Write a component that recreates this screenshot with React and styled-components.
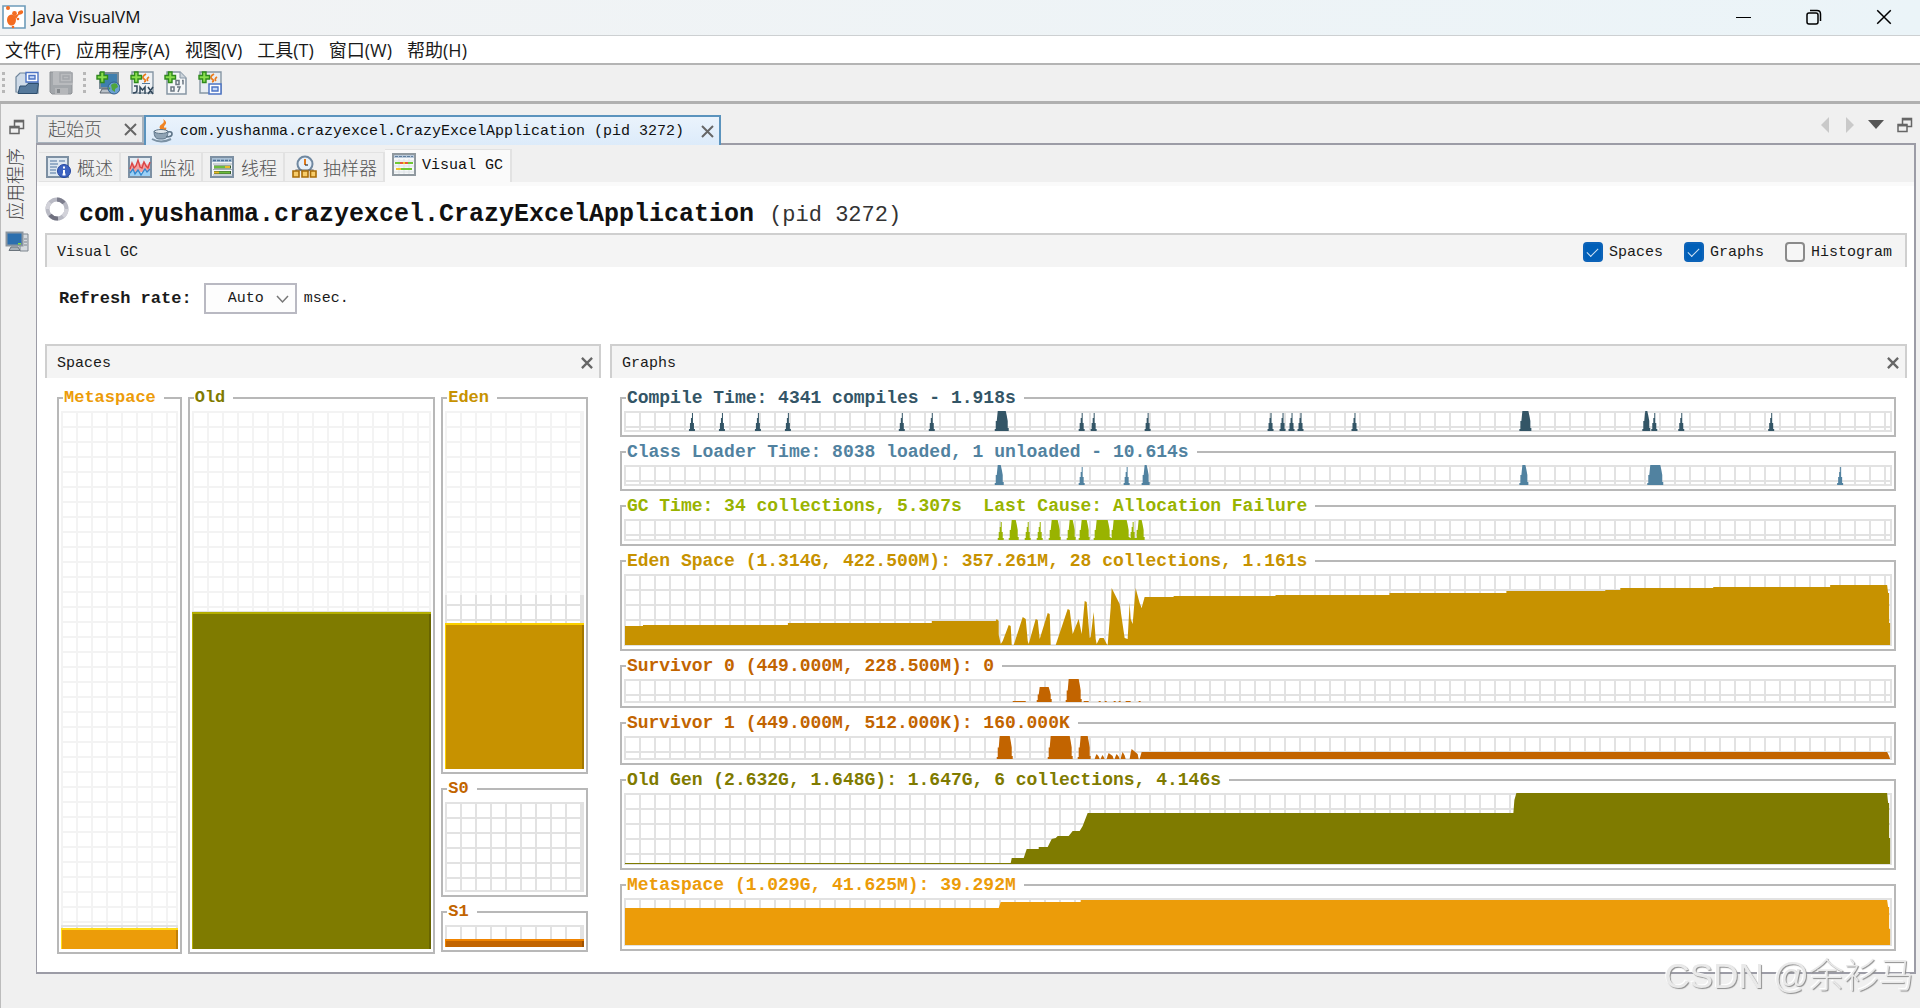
import React, { useState } from "react";
import styled, { createGlobalStyle, css } from "styled-components";

const GlobalStyle = createGlobalStyle`
  * {
    box-sizing: border-box;
  }
  body {
    margin: 0;
    background: #f0f0f0;
    color: #1a1a1a;
    font-family: "Liberation Mono", "Noto Sans CJK SC", monospace;
    font-size: 15px;
  }
  button, select, input {
    font: inherit;
    color: inherit;
    margin: 0;
  }
  button {
    border: 0;
    padding: 0;
    background: none;
  }
  svg {
    display: block;
    flex: none;
  }
`;

const sansFont = css`
  font-family: "Open Sans", "Noto Sans", "Noto Sans CJK SC", sans-serif;
`;

const Window = styled.div`
  min-height: 100vh;
  display: flex;
  flex-direction: column;
`;

const TitleBar = styled.header`
  ${sansFont}
  display: flex;
  align-items: center;
  height: 36px;
  padding: 0 28px 2px 2px;
  gap: 6px;
  background: linear-gradient(90deg, #f2f3f4, #ebf4f8);
  border-bottom: 1px solid #cdd0d2;
  font-size: 17px;
  color: #111;
`;

const WindowButtons = styled.div`
  display: flex;
  gap: 54px;
  margin-left: auto;
`;

const MenuBar = styled.nav`
  ${sansFont}
  display: flex;
  gap: 15px;
  height: 29px;
  padding: 0 5px;
  background: #fff;
  border-bottom: 2px solid #b4b4b4;
  font-size: 18px;
  line-height: 26px;
`;

const ToolBar = styled.div`
  display: flex;
  align-items: center;
  gap: 10px;
  height: 39px;
  padding: 0 2px 1px;
  border-bottom: 3px solid #b0b0b0;
`;

const Grip = styled.span`
  width: 3px;
  height: 22px;
  background: repeating-linear-gradient(#b8b8b8 0 3px, transparent 3px 6px);
`;

const Workspace = styled.div`
  flex: 1;
  display: flex;
  border-left: 1px solid #bcbcbc;
`;

const Rail = styled.aside`
  width: 35px;
  display: flex;
  flex-direction: column;
  align-items: center;
  padding: 15px 4px 0 0;
  gap: 11px;
`;

const RailLabel = styled.button`
  writing-mode: vertical-rl;
  text-orientation: sideways;
  transform: rotate(180deg);
  margin-top: 2px;
  font-size: 18px;
  line-height: 18px;
  font-weight: 300;
  color: #444;
`;

const Documents = styled.main`
  flex: 1;
  min-width: 0;
  display: flex;
  flex-direction: column;
  padding: 11px 4px 34px 0;
`;

const TabStrip = styled.div`
  display: flex;
  height: 30px;
  border-bottom: 2px solid #9c9ca6;
`;

const DocTab = styled.div`
  display: flex;
  align-items: center;
  gap: ${(p) => (p.$active ? "7px" : "22px")};
  padding: ${(p) => (p.$active ? "0 5px" : "0 5px 0 10px")};
  border: 2px solid #a9b3bd;
  border-bottom-width: ${(p) => (p.$active ? "0" : "1px")};
  background: #ececec;
  color: #555;
  ${(p) =>
    p.$active &&
    css`
      margin-bottom: -2px;
      border-color: #5b93bd;
      background: linear-gradient(#eaf3fc, #dcebfa);
      color: #111;
    `}
`;

const TabTitle = styled.button`
  font-size: ${(p) => (p.$cjk ? "18px" : "15px")};
  font-weight: ${(p) => (p.$cjk ? 300 : 400)};
  line-height: 24px;
  white-space: pre;
  padding-top: 2px;
  margin-right: ${(p) => (p.$cjk ? "0" : "10px")};
`;

const StripButtons = styled.div`
  display: flex;
  align-items: flex-start;
  gap: 13px;
  margin-left: auto;
  padding: 2px 3px 0 0;
`;

const DocBody = styled.section`
  flex: 1;
  display: flex;
  flex-direction: column;
  border: solid #9c9ca6;
  border-width: 0 2px 2px 1px;
  background: #fff;
`;

const ViewTabs = styled.div`
  display: flex;
  align-items: flex-end;
  height: 41px;
  padding: 0 2px 4px;
  background: linear-gradient(#f0f0f0 37px, #fafafa 37px);
`;

const ViewTab = styled.button`
  display: flex;
  align-items: center;
  gap: 6px;
  height: 30px;
  padding: 0 6px 0 7px;
  border: solid #e2e2e2;
  border-width: 1px 2px 1px 0;
  font-size: 18px;
  font-weight: 300;
  color: #555;
  white-space: pre;
  ${(p) =>
    p.$active &&
    css`
      height: 33px;
      gap: 5px;
      padding: 0 7px 2px;
      border-bottom: 0;
      background: #fafafa;
      font-size: 15px;
      font-weight: 400;
      color: #111;
    `}
`;

const Heading = styled.div`
  display: flex;
  align-items: flex-start;
  gap: 10px;
  height: 47px;
  padding: 11px 8px 0;
`;

const AppTitle = styled.h1`
  margin: 0;
  padding-top: 2px;
  font-size: 25px;
  line-height: 32px;
  color: #111;
  small {
    font-size: 22px;
    font-weight: 400;
    color: #333;
  }
`;

const Content = styled.div`
  padding: 0 7px 18px 8px;
`;

const PanelHeader = styled.div`
  display: flex;
  align-items: center;
  height: 34px;
  padding: 2px ${(p) => (p.$options ? "13px" : "6px")} 0 10px;
  border: 2px solid #cfcfcf;
  border-bottom: 0;
  background: #f4f4f4;
`;

const PanelTitle = styled.h2`
  margin: 0 auto 0 0;
  font-size: 15px;
  font-weight: 400;
`;

const Option = styled.label`
  display: flex;
  align-items: center;
  gap: 6px;
  margin-left: 21px;
`;

const CheckBox = styled.input`
  appearance: none;
  display: grid;
  place-items: center;
  width: 20px;
  height: 20px;
  border: 2px solid #8a8a8a;
  border-radius: 4px;
  background: #f6f6f6;
  &:checked {
    border-color: #0d63b8;
    background: #005fb8;
  }
  &:checked::after {
    content: "";
    width: 10px;
    height: 5px;
    margin-top: -3px;
    border: solid #cfe3f5;
    border-width: 0 0 1px 1px;
    transform: rotate(-45deg);
  }
`;

const RefreshRow = styled.div`
  display: flex;
  align-items: center;
  gap: 7px;
  height: 77px;
  padding: 0 14px 14px;
  label {
    font-size: 17px;
    font-weight: 700;
  }
`;

const SelectBox = styled.div`
  position: relative;
  margin-left: 5px;
  svg {
    position: absolute;
    right: 8px;
    top: 12px;
    pointer-events: none;
  }
`;

const Select = styled.select`
  appearance: none;
  width: 93px;
  height: 31px;
  padding: 0 22px;
  border: 2px solid #b9b9c2;
  border-radius: 0;
  background: #fdfdfd;
`;

const Panels = styled.div`
  display: grid;
  grid-template-columns: minmax(0, 3fr) minmax(0, 7fr);
  gap: 9px;
`;

const Panel = styled.section`
  display: flex;
  flex-direction: column;
`;

const SpacesGrid = styled.div`
  flex: 1;
  display: grid;
  grid-template-columns: 125fr 248fr 147fr;
  gap: 6px;
  padding: 10px 13px 0 12px;
`;

const SpaceColumn = styled.div`
  display: flex;
  flex-direction: column;
  gap: 5px;
  padding-bottom: 2px;
`;

const GraphList = styled.div`
  display: flex;
  flex-direction: column;
  gap: 5px;
  padding: 10px 11px 3px 10px;
`;

const Frame = styled.fieldset`
  display: flex;
  flex-direction: column;
  flex: ${(p) => (p.$grow ? 1 : "none")};
  min-width: 0;
  margin: 0;
  padding: 3px 2px;
  border: 2px solid #b8b8b8;
`;

const Legend = styled.legend`
  margin-left: 2px;
  padding: 0 8px 0 1px;
  font-size: ${(p) => (p.$small ? "17px" : "18px")};
  font-weight: 700;
  line-height: 20px;
  white-space: pre;
  color: ${(p) => p.$color};
`;

const gridLines = css`
  background-image: linear-gradient(90deg, ${(p) => p.$line || "#e2e2e2"} 2px, transparent 2px),
    linear-gradient(${(p) => p.$line || "#e2e2e2"} 2px, transparent 2px);
  background-size: 15px 15px;
  background-position: 0 ${(p) => p.$phase || 0}px;
`;

const SpacePlot = styled.div`
  flex: 1 0 ${(p) => p.$min}px;
  display: flex;
  flex-direction: column;
`;

const Cells = styled.div`
  ${gridLines}
  flex: ${(p) => p.$share} 1 0;
  border-right: 2px solid ${(p) => p.$line || "#e2e2e2"};
  border-bottom: ${(p) => (p.$closed ? "2px solid #e2e2e2" : "0")};
`;

const Used = styled.div`
  flex: ${(p) => p.$share} 1 0;
  background: ${(p) => p.$color};
  border: solid ${(p) => p.$light};
  border-width: 2px 0 0 1px;
  box-shadow: inset -2px 0 0 rgba(0, 0, 0, 0.18);
`;

const Plot = styled.svg`
  ${gridLines}
  width: 100%;
  border: solid #e2e2e2;
  border-width: 0 2px 2px 0;
  overflow: visible;
`;

const Watermark = styled.div`
  position: fixed;
  right: 6px;
  bottom: 10px;
  font-family: "Liberation Sans", "Noto Sans CJK SC", sans-serif;
  font-size: 35px;
  font-weight: 300;
  line-height: 44px;
  color: #e9e9e9;
  text-shadow: 1px 1px 1px #8c8c8c, -1px -1px 0 #fff;
  pointer-events: none;
`;

/* ---- icons ---- */

const CloseIcon = ({ size = 13, width = 2, color = "#666" }) => (
  <svg width={size} height={size} viewBox="0 0 13 13" stroke={color} strokeWidth={width}>
    <path d="M1 1 12 12M12 1 1 12" />
  </svg>
);

const RestoreIcon = () => (
  <svg width="16" height="16" viewBox="0 0 16 16" fill="#f0f0f0" stroke="#666" strokeWidth="1.5">
    <path d="M5.5 1.5h9v8h-9z" />
    <path d="M5 2.2h10" strokeWidth="2.5" />
    <path d="M1 7.5h9v7H1z" />
    <path d="M1 8.2h9" strokeWidth="2.5" />
  </svg>
);

const LogoIcon = () => (
  <svg width="24" height="24" viewBox="0 0 24 24">
    <path fill="#fff" stroke="#6d9cba" strokeWidth="1.6" d="M1 1h22v22H1z" />
    <g fill="#f36c21">
      <ellipse cx="9.500" cy="15" rx="4.500" ry="5.500" />
      <circle cx="12.500" cy="8.500" r="2.400" />
      <ellipse cx="18.500" cy="7.500" rx="2.800" ry="2" transform="rotate(-25 18.500 7.500)" />
      <circle cx="6" cy="3" r="2" />
      <circle cx="16" cy="14" r="1.300" />
      <circle cx="11" cy="22" r="1.300" />
      <path d="m12 11 6-3-4 6z" />
    </g>
  </svg>
);

const OpenIcon = () => (
  <svg width="24" height="24" viewBox="0 0 24 24">
    <path fill="#cfdbe8" stroke="#71879c" strokeWidth="1.2" d="M1 21V6l4-4h5l2 3v6h11v11z" />
    <path fill="#fff" stroke="#4d74c4" strokeWidth="1.4" d="M11 1.500h12v9.500H11z" />
    <path fill="#c7d9f8" stroke="#4d74c4" strokeWidth="1.400" d="M14 4.500h6V8h-6z" />
    <path fill="#56799b" stroke="#2f4f6e" d="M3 22.500 5 15h6l2-2.500h10.500L22 22.500z" />
  </svg>
);

const SaveIcon = () => (
  <svg width="24" height="24" viewBox="0 0 24 24">
    <path fill="#a3a7ab" stroke="#8f9296" d="M1 1h21l1 1v20l-1 1H3l-2-2z" />
    <path fill="#b9bbbe" d="M4 1h19v13H4z" />
    <path fill="none" stroke="#a3a6aa" strokeWidth="1.400" d="M11 2h12v9H11zM14 5h6v3h-6z" />
    <path fill="#b5b7ba" d="M6 17h13v6H6z" />
    <path fill="#85898d" d="M8 18h3v4H8z" />
  </svg>
);

const Plus = () => (
  <path
    fill="#8ade4e"
    stroke="#2f8a1c"
    strokeWidth="1.400"
    d="M4.500 1h3.500v3.500h3.500V8H8v3.500H4.500V8H1V4.500h3.500z"
  />
);

const AddHostIcon = () => (
  <svg width="24" height="24" viewBox="0 0 24 24">
    <path fill="#3f7fae" stroke="#7c8c98" strokeWidth="2" d="M4 2h18v15H4z" />
    <path fill="#b9c0c7" stroke="#5c656e" d="M6 18h9l2 4H4z" />
    <circle cx="18" cy="17" r="6" fill="#6a9fd0" stroke="#2f5f8f" />
    <path fill="#4fa53c" d="M15 14q3-3 6-1l1 3-3 2v3l-3-2zM12.500 16l2 1-1 2z" />
    <Plus />
  </svg>
);

const JmxIcon = () => (
  <svg width="24" height="24" viewBox="0 0 24 24">
    <path fill="#eef1f4" stroke="#8796a4" strokeWidth="1.400" d="M2 1h21v21H2z" />
    <path fill="none" stroke="#ec7a1c" strokeWidth="1.700" d="M16 3q-5 3-2 5t0 3M19 6q-3 2-1 4" />
    <path fill="none" stroke="#557a9d" d="M12 12.500h8" />
    <path
      fill="none"
      stroke="#34495c"
      strokeWidth="1.500"
      d="M4 15h3v4q0 3-4 3M10 23v-7l2.500 3 2.500-3v7M18 16l5 7M23 16l-5 7"
    />
    <Plus />
  </svg>
);

const DumpIcon = () => (
  <svg width="24" height="24" viewBox="0 0 24 24">
    <path fill="#f5f7f8" stroke="#8796a4" strokeWidth="1.500" d="M3 1h13l6 6v16H3z" />
    <path fill="#ccd4db" stroke="#8796a4" d="M16 1v6h6" />
    <g fill="none" stroke="#6c7883" strokeWidth="1.500">
      <path d="M12 9.500h3v4h-3zM18 9.500h1v4M7 16h3v4H7zM13 16h3l-2 5" />
    </g>
    <Plus />
  </svg>
);

const SnapshotIcon = () => (
  <svg width="24" height="24" viewBox="0 0 24 24">
    <path fill="#e8edf2" stroke="#8796a4" strokeWidth="1.400" d="M2 1h21v21H2z" />
    <path fill="none" stroke="#ec7a1c" strokeWidth="1.700" d="M16 3q-5 3-2 5t0 3M19 6q-3 2-1 4" />
    <path fill="#fff" stroke="#4d74c4" strokeWidth="1.500" d="M11 13h12v10H11z" />
    <path fill="#c7d9f8" stroke="#4d74c4" strokeWidth="1.400" d="M14 16h6v4h-6z" />
    <Plus />
  </svg>
);

const HostIcon = () => (
  <svg width="24" height="22" viewBox="0 0 24 22">
    <path fill="#d5dade" stroke="#7c858e" d="M15 3h8v17h-8z" />
    <path stroke="#7c858e" d="M19 8h3M19 11h3M19 14h3" />
    <path fill="#2c6fae" stroke="#8b959f" strokeWidth="2" d="M1.500 1.500h16v13h-16z" />
    <path fill="#a9b1b8" stroke="#6b747c" d="M6 16h7l2 3.500H4z" />
    <path fill="#86dd3a" d="M13 12h3v1.500h-3z" />
  </svg>
);

const JavaIcon = () => (
  <svg width="22" height="24" viewBox="0 0 22 24">
    <path fill="#f08424" d="M11 12q-5-4 0-7 3-2 1-5 5 3 2 6-2 2 0 3 2-2 1 2z" />
    <path fill="#8fa3b4" stroke="#5e7588" d="M3 12h14q0 8-5 8H8q-5 0-5-8z" />
    <ellipse cx="10" cy="12.500" rx="6.500" ry="2" fill="#dfe7ed" stroke="#5e7588" />
    <path fill="none" stroke="#5e7588" strokeWidth="1.700" d="M17 13q4-1 4 2t-6 3" />
    <path fill="none" stroke="#7c92a4" strokeWidth="2" d="M1 20q9 5 19 0" />
  </svg>
);

const OverviewIcon = () => (
  <svg width="25" height="24" viewBox="0 0 25 24">
    <path fill="#dde7f0" stroke="#7d90a3" strokeWidth="2" d="M1 2h21v20H1z" />
    <path stroke="#7e9bbb" strokeWidth="1.500" d="M4 6h7M13 6h6M4 9h8M4 12h7M4 15h6M4 18h6" />
    <circle cx="18" cy="16" r="6.500" fill="#3d63c0" stroke="#2446a0" />
    <path stroke="#fff" strokeWidth="2" d="M18 15v5M18 11.500v2M16.500 19.500h3" />
  </svg>
);

const MonitorIcon = () => (
  <svg width="25" height="24" viewBox="0 0 25 24">
    <path fill="#e4ecf3" stroke="#7d90a3" strokeWidth="2" d="M1 2h22v20H1z" />
    <path fill="#f3a0a0" d="M2 12l3-4 2 3 3-6 3 5 3-4 3 4 3-3v10H2z" />
    <path fill="#9bd0f6" d="M2 17l3-3 3 4 3-3 3 4 3-5 3 3 2-2v6H2z" />
    <path
      fill="none"
      stroke="#d84343"
      strokeWidth="1.300"
      d="M2 14l2-6 2 5 2-2 2-6 2 7 2 1 2-6 2 4 2 2 2-6"
    />
    <path fill="none" stroke="#3386cc" strokeWidth="1.300" d="M2 18l3-4 2 5 3-4 3 5 4-6 2 3 3-3" />
  </svg>
);

const ThreadsIcon = () => (
  <svg width="25" height="24" viewBox="0 0 25 24">
    <path fill="#f4f6f8" stroke="#7d90a3" strokeWidth="2" d="M1 2h22v20H1z" />
    <path fill="#a9c0d5" d="M2 3h20v4H2z" />
    <path stroke="#4c7196" strokeWidth="1.500" strokeDasharray="3 1" d="M3 5.500h18" />
    <path stroke="#a4afb9" d="M3 9h19M3 14.500h19M3 20h19" />
    <path stroke="#385e30" strokeWidth="3" d="M4 12h17M4 17.500h17" />
    <path stroke="#6cbb3c" strokeWidth="2" d="M4 12h11M9 17.500h11" />
    <path stroke="#e9bb28" strokeWidth="2" d="M15 12h5M4 17.500h5" />
  </svg>
);

const SamplerIcon = () => (
  <svg width="25" height="24" viewBox="0 0 25 24">
    <circle cx="13" cy="9" r="7.500" fill="#e6f0fa" stroke="#7088a0" strokeWidth="2" />
    <path stroke="#e07a1c" strokeWidth="2" d="M13 4v6" />
    <path stroke="#333" strokeWidth="1.200" d="M13 10h3" />
    <path fill="none" stroke="#666" strokeWidth="1.200" d="M4 17v-2h17v2" />
    <g fill="#f7cc6a" stroke="#a96c08" strokeWidth="1.600">
      <path d="M1 16h6v6H1zM10 16h6v6h-6zM18.500 16h5.500v6h-5.500z" />
    </g>
  </svg>
);

const VisualGcIcon = () => (
  <svg width="25" height="24" viewBox="0 0 25 24">
    <path fill="#f6f8f9" stroke="#90999f" strokeWidth="2" d="M1 1h22v21H1z" />
    <path fill="#b9c9da" d="M2 2h20v3H2z" />
    <path stroke="#5f7f9f" strokeDasharray="3 1" d="M3 3.500h18" />
    <path stroke="#dde2e5" d="M2 8h20M2 13h20M2 19h20M7 6v15M12 6v15M17 6v15" />
    <path stroke="#6fc834" strokeWidth="2" d="M3 10h5M16 10h5M9 16h11" />
    <path stroke="#e65a3a" strokeWidth="2" d="M8 10h3M13 10h3" />
    <path stroke="#eec52c" strokeWidth="2" d="M11 10h2M4 16h5" />
  </svg>
);

const SpinnerIcon = () => (
  <svg width="24" height="24" viewBox="0 0 24 24" fill="none" strokeWidth="4">
    <circle cx="12" cy="12" r="9.500" stroke="#b9bac4" />
    <path stroke="#7c7d8c" d="M12 2.500A9.500 9.500 0 0 1 19 6" />
    <path stroke="#6f707f" d="M5 18A9.500 9.500 0 0 0 13 21.500" />
    <path stroke="#d2d2d9" d="M2.500 12A9.500 9.500 0 0 1 5 5.500M21.500 12A9.500 9.500 0 0 1 18 19.500" />
  </svg>
);

/* ---- data ---- */

const PLOT_WIDTH = 1267;

// one sample: a narrow peak
const spike = (x) => [
  [x - 3, 0], [x - 3, 2], [x - 2, 2], [x - 2, 8], [x - 1, 8], [x - 1, 13],
  [x, 13], [x, 18], [x + 1, 18], [x + 1, 8], [x + 2, 8], [x + 2, 2], [x + 3, 2], [x + 3, 0],
];

// several samples in a row
const block = (from, to, h = 20) => [
  [from, 0], [from, 2], [from + 1, 2], [from + 1, h / 2], [from + 2, h / 2], [from + 3, h],
  [to - 3, h], [to - 2, h / 1.3], [to - 1, h / 2], [to - 1, 3], [to, 3], [to, 0],
];

const bar = (from, to, h = 1) => [[from, 0], [from, h], [to, h], [to, 0]];

const hill = (from, to, h) => [[from, 0], [from + 1, h * 0.6], [from + 2, h], [to - 1, h * 0.5], [to, 0]];

const compile = [
  ...[68, 98, 134, 164, 278, 308].map(spike),
  block(371, 385),
  ...[458, 470, 524, 647, 659, 668, 677, 731].map(spike),
  block(896, 908),
  block(1019, 1027),
  ...[1031, 1058, 1148].map(spike),
].flat();

const classLoader = [
  block(371, 380), spike(458), spike(503), block(518, 526),
  block(896, 905), block(1024, 1040), spike(1217),
].flat();

const gcTime = [
  spike(377), block(385, 395), spike(404), spike(416), block(425, 437), block(443, 452),
  block(455, 466), block(470, 487), block(487, 506), spike(509), block(512, 521),
].flat();

const eden = [
  [1, 0], [1, 19], [19, 19], [19, 20], [164, 20], [164, 22], [308, 22], [308, 24], [372, 24],
  [373, 26], [375, 24], [375, 10], [377, 1], [379, 4], [385, 20], [387, 19], [388, 0], [390, 0],
  [399, 28], [402, 26], [404, 4], [405, 1], [412, 26], [414, 25], [416, 6], [424, 32], [426, 31],
  [427, 0], [432, 0], [444, 36], [446, 35], [449, 11], [455, 26], [458, 11], [461, 44], [463, 43],
  [466, 7], [467, 8], [470, 33], [472, 6], [473, 1], [476, 7], [480, 7], [483, 1], [484, 0],
  [487, 37], [488, 57], [496, 41], [501, 7], [504, 6], [506, 42], [507, 26], [509, 21], [512, 57],
  [516, 42], [518, 37], [521, 48], [550, 48], [550, 49], [652, 49], [652, 50], [766, 50], [766, 52],
  [883, 52], [883, 54], [982, 54], [982, 55], [997, 55], [997, 57], [1090, 57], [1090, 58],
  [1207, 58], [1207, 60], [1264, 60], [1265, 52], [1266, 52], [1266, 22], [1267, 22], [1267, 0],
];

const survivor0 = [
  bar(389, 402), block(413, 428, 15), block(442, 458, 23), bar(460, 465), bar(475, 477),
  bar(481, 483), bar(490, 492), bar(495, 497), bar(502, 507), bar(515, 517),
].flat();

const survivor1 = [
  block(373, 389, 23), block(424, 449, 23), block(454, 467, 23), hill(471, 476, 5), hill(477, 481, 4),
  hill(483, 490, 6), hill(491, 496, 5), hill(497, 502, 7), hill(506, 515, 10),
  [[516, 0], [518, 7], [1264, 7], [1266, 3], [1267, 0]],
].flat();

const oldGen = [
  [1, 0], [1, 1], [387, 1], [388, 6], [400, 6], [403, 15], [415, 15], [415, 17], [424, 17],
  [428, 25], [432, 26], [434, 28], [445, 28], [449, 33], [456, 33], [459, 38], [464, 51],
  [890, 51], [891, 64], [893, 71], [1264, 71], [1265, 61], [1266, 61], [1266, 26], [1267, 26], [1267, 0],
];

const metaspace = [
  [1, 0], [1, 37], [375, 37], [377, 43], [457, 43], [457, 45], [1264, 45], [1265, 38], [1266, 38],
  [1266, 16], [1267, 16], [1267, 0],
];

const graphs = [
  { title: "Compile Time: 4341 compiles - 1.918s", color: "#335566", height: 21, points: compile },
  { title: "Class Loader Time: 8038 loaded, 1 unloaded - 10.614s", color: "#5182a0", height: 21, points: classLoader },
  { title: "GC Time: 34 collections, 5.307s  Last Cause: Allocation Failure", color: "#99b300", height: 22, points: gcTime },
  { title: "Eden Space (1.314G, 422.500M): 357.261M, 28 collections, 1.161s", color: "#c79200", height: 72, points: eden },
  { title: "Survivor 0 (449.000M, 228.500M): 0", color: "#c26400", height: 24, points: survivor0 },
  { title: "Survivor 1 (449.000M, 512.000K): 160.000K", color: "#c26400", height: 24, points: survivor1 },
  { title: "Old Gen (2.632G, 1.648G): 1.647G, 6 collections, 4.146s", color: "#7f7b00", height: 72, points: oldGen },
  { title: "Metaspace (1.029G, 41.625M): 39.292M", color: "#ec9c09", height: 48, points: metaspace },
];

const menus = ["文件(F)", "应用程序(A)", "视图(V)", "工具(T)", "窗口(W)", "帮助(H)"];

const views = [
  { label: "概述", icon: <OverviewIcon /> },
  { label: "监视", icon: <MonitorIcon /> },
  { label: "线程", icon: <ThreadsIcon /> },
  { label: "抽样器", icon: <SamplerIcon /> },
  { label: "Visual GC", icon: <VisualGcIcon /> },
];

/* ---- parts ---- */

const Space = ({ title, color, light, reserved, committed, used, phase, grow, min }) => (
  <Frame $grow={grow}>
    <Legend $color={color} $small>{title}</Legend>
    <SpacePlot $min={min || 0}>
      {reserved > 0 && <Cells $share={reserved} $line="#f3f3f3" />}
      {committed > 0 && <Cells $share={committed} $phase={phase} $closed={!used} />}
      {used > 0 && <Used $share={used} $color={color} $light={light} />}
    </SpacePlot>
  </Frame>
);

const Graph = ({ title, color, height, points }) => (
  <Frame>
    <Legend $color={color}>{title}</Legend>
    <Plot height={height} viewBox={`0 0 ${PLOT_WIDTH} ${height - 2}`} preserveAspectRatio="none">
      <polygon fill={color} points={points.map(([x, h]) => `${x},${height - h - 1}`).join(" ")} />
    </Plot>
  </Frame>
);

const App = () => {
  const [shown, setShown] = useState({ Spaces: true, Graphs: true, Histogram: false });
  const [view, setView] = useState("Visual GC");

  const toggle = (name) => setShown({ ...shown, [name]: !shown[name] });

  return (
    <Window>
      <GlobalStyle />
      <TitleBar>
        <LogoIcon />
        <span>Java VisualVM</span>
        <WindowButtons>
          <button aria-label="Minimize">
            <svg width="16" height="16" stroke="#000" strokeWidth="1">
              <path d="M0 8.500h15" />
            </svg>
          </button>
          <button aria-label="Restore">
            <svg width="16" height="16" fill="none" stroke="#000" strokeWidth="1.500">
              <rect x="1" y="4" width="11" height="11" rx="2" />
              <path d="M4 1.500h7q3.500 0 3.500 3.500v7" />
            </svg>
          </button>
          <button aria-label="Close">
            <CloseIcon size={16} width={1.2} color="#000" />
          </button>
        </WindowButtons>
      </TitleBar>

      <MenuBar>
        {menus.map((m) => (
          <button key={m}>{m}</button>
        ))}
      </MenuBar>

      <ToolBar>
        <Grip />
        <button aria-label="Load"><OpenIcon /></button>
        <button aria-label="Save"><SaveIcon /></button>
        <Grip />
        <button aria-label="Add remote host"><AddHostIcon /></button>
        <button aria-label="Add JMX connection"><JmxIcon /></button>
        <button aria-label="Add core dump"><DumpIcon /></button>
        <button aria-label="Add snapshot"><SnapshotIcon /></button>
      </ToolBar>

      <Workspace>
        <Rail>
          <button aria-label="Restore group"><RestoreIcon /></button>
          <RailLabel>应用程序</RailLabel>
          <HostIcon />
        </Rail>

        <Documents>
          <TabStrip>
            <DocTab>
              <TabTitle $cjk>起始页</TabTitle>
              <button aria-label="Close tab"><CloseIcon /></button>
            </DocTab>
            <DocTab $active>
              <JavaIcon />
              <TabTitle>com.yushanma.crazyexcel.CrazyExcelApplication (pid 3272)</TabTitle>
              <button aria-label="Close tab"><CloseIcon /></button>
            </DocTab>
            <StripButtons>
              <button aria-label="Scroll left">
                <svg width="12" height="16" fill="#c9c9c9"><path d="M9 0v16L1 8z" /></svg>
              </button>
              <button aria-label="Scroll right">
                <svg width="10" height="16" fill="#c9c9c9"><path d="M1 0v16l8-8z" /></svg>
              </button>
              <button aria-label="Documents list">
                <svg width="16" height="16" fill="#555"><path d="M0 3h16l-8 9z" /></svg>
              </button>
              <button aria-label="Restore window"><RestoreIcon /></button>
            </StripButtons>
          </TabStrip>

          <DocBody>
            <ViewTabs>
              {views.map(({ label, icon }) => (
                <ViewTab key={label} $active={label === view} onClick={() => setView(label)}>
                  {icon}
                  {label}
                </ViewTab>
              ))}
            </ViewTabs>

            <Heading>
              <SpinnerIcon />
              <AppTitle>
                com.yushanma.crazyexcel.CrazyExcelApplication <small>(pid 3272)</small>
              </AppTitle>
            </Heading>

            <Content>
              <PanelHeader $options>
                <PanelTitle>Visual GC</PanelTitle>
                {Object.keys(shown).map((name) => (
                  <Option key={name}>
                    <CheckBox type="checkbox" checked={shown[name]} onChange={() => toggle(name)} />
                    {name}
                  </Option>
                ))}
              </PanelHeader>

              <RefreshRow>
                <label htmlFor="refresh">Refresh rate:</label>
                <SelectBox>
                  <Select id="refresh" defaultValue="Auto">
                    <option>Auto</option>
                    <option>100</option>
                    <option>500</option>
                    <option>1000</option>
                  </Select>
                  <svg width="13" height="9" fill="none" stroke="#777" strokeWidth="1.500">
                    <path d="m1 1 5.500 6L12 1" />
                  </svg>
                </SelectBox>
                <span>msec.</span>
              </RefreshRow>

              <Panels>
                {shown.Spaces && (
                  <Panel>
                    <PanelHeader>
                      <PanelTitle>Spaces</PanelTitle>
                      <button aria-label="Close Spaces" onClick={() => toggle("Spaces")}>
                        <CloseIcon size={12} width={2.5} />
                      </button>
                    </PanelHeader>
                    <SpacesGrid>
                      <Space title="Metaspace" color="#ec9c09" light="#ffdc1c" reserved={516} committed={3} used={19} />
                      <Space title="Old" color="#7f7b00" light="#b3ad00" reserved={201} committed={1} used={336} />
                      <SpaceColumn>
                        <Space title="Eden" color="#c79200" light="#fbd000" reserved={186} committed={28} used={145} phase={9} grow />
                        <Space title="S0" color="#c26400" committed={90} min={90} />
                        <Space title="S1" color="#c26400" light="#f08400" committed={15} used={7} min={22} />
                      </SpaceColumn>
                    </SpacesGrid>
                  </Panel>
                )}
                {shown.Graphs && (
                  <Panel>
                    <PanelHeader>
                      <PanelTitle>Graphs</PanelTitle>
                      <button aria-label="Close Graphs" onClick={() => toggle("Graphs")}>
                        <CloseIcon size={12} width={2.5} />
                      </button>
                    </PanelHeader>
                    <GraphList>
                      {graphs.map((g) => (
                        <Graph key={g.title} {...g} />
                      ))}
                    </GraphList>
                  </Panel>
                )}
              </Panels>
            </Content>
          </DocBody>
        </Documents>
      </Workspace>
      <Watermark>CSDN @余衫马</Watermark>
    </Window>
  );
};

export default App;
